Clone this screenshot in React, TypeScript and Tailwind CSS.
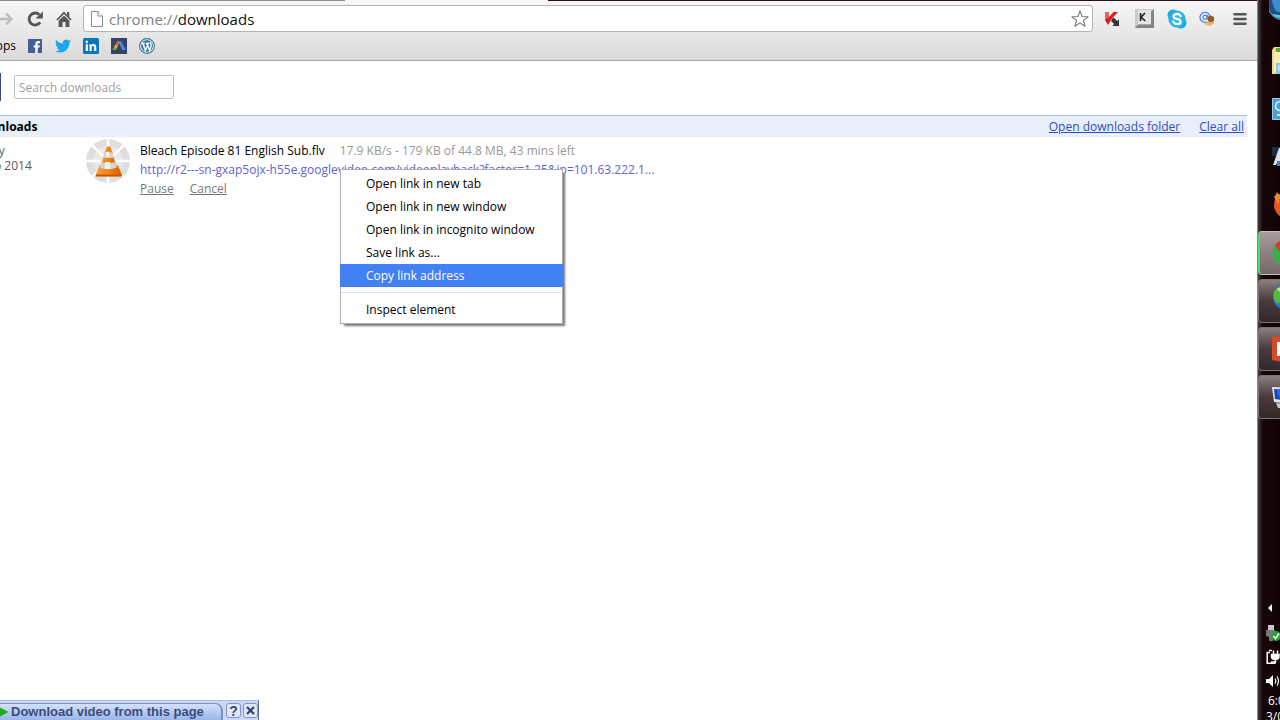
import type { ReactNode } from 'react'

const MENU_ITEMS = [
  'Open link in new tab',
  'Open link in new window',
  'Open link in incognito window',
  'Save link as...',
  'Copy link address',
]
const ACTIVE_ITEM = 'Copy link address'

/* ---------- toolbar icons ---------- */

function ForwardIcon() {
  return (
    <svg width="16" height="16" viewBox="0 0 16 16" fill="none" stroke="#bdbdbd" strokeWidth="2.4">
      <path d="M0 8h13M8 2.5 13.5 8 8 13.5" />
    </svg>
  )
}

function ReloadIcon() {
  return (
    <svg width="16" height="16" viewBox="0 0 16 16">
      <path d="M13.2 11.2A6 6 0 1 1 12.4 3.8" fill="none" stroke="#555" strokeWidth="2.8" />
      <path d="M15.8.4v7H8.600z" fill="#555" />
    </svg>
  )
}

function HomeIcon() {
  return (
    <svg width="16" height="16" viewBox="0 0 16 16" fill="#555">
      <path d="M8 .6.4 8.400l1.100 1.100L8 3l6.500 6.500 1.100-1.100-2.300-2.400V1h-2.300v2.700z" />
      <path d="M8 4.400 2.600 9.800V16H6.500v-5h3v5h3.900V9.800z" />
    </svg>
  )
}

function PageIcon() {
  return (
    <svg width="12" height="16" viewBox="0 0 12 16" fill="#fdfdfd" stroke="#8c8c8c">
      <path d="M.5.5h6.500l4.500 4.500v10.500H.5z" />
      <path d="M7 .5V5h4.500" />
    </svg>
  )
}

function StarIcon() {
  return (
    <svg width="18" height="18" viewBox="0 0 20 20" fill="#fff" stroke="#777" strokeWidth="1.200" strokeLinejoin="round">
      <path d="m10 1 2.300 6.200 6.700.3-5.200 4.100 1.800 6.400-5.600-3.700L4.400 18l1.800-6.400L1 7.500l6.700-.3z" />
    </svg>
  )
}

function KasperskyIcon() {
  return (
    <svg width="16" height="16" viewBox="0 0 16 16">
      <path d="M1 1h4v5l4.500-5H14L7.500 8 4 14 1 9z" fill="#e21b1b" />
      <path d="M1 1h4v5L1 9z" fill="#f0605a" />
      <path d="m8 8 1.600-1.600 3.600 3.600L15 8.300V15H8.300l1.900-1.900L7 10z" fill="#333" />
    </svg>
  )
}

function KeyIcon() {
  return (
    <svg width="19" height="19" viewBox="0 0 19 19">
      <path d="M0 0h19v19H0z" fill="#a8a8a8" />
      <path d="M0 0h19l-3 3H3v13l-3 3z" fill="#c9c9c9" />
      <path d="M19 0v19H0l3-3h13V3z" fill="#858585" />
      <path d="M3 1h13v14H3z" fill="#e4e4e4" />
      <path d="M5.500 4v8M10 4 6 8.200 10.300 12" fill="none" stroke="#222" strokeWidth="1.600" />
    </svg>
  )
}

function SkypeIcon() {
  return (
    <svg width="20" height="20" viewBox="0 0 20 20">
      <circle cx="6" cy="6" r="5.500" fill="#1fa8de" />
      <circle cx="14" cy="14" r="5.500" fill="#1fa8de" />
      <circle cx="10" cy="10" r="8.600" fill="#2bb3e6" />
      <path d="M13.600 7.200C13 5.600 11.600 5 10 5 8 5 6.600 6 6.600 7.500c0 3.300 7 1.500 7 4.900 0 1.700-1.600 2.700-3.500 2.700-1.900 0-3.400-.8-3.900-2.600" fill="none" stroke="#fff" strokeWidth="2.300" strokeLinecap="round" />
    </svg>
  )
}

function MailIcon() {
  return (
    <svg width="16" height="16" viewBox="0 0 16 16" fill="none">
      <path d="M8.500 10.700A5 5 0 1 1 11 6.500c0 2.400-2.700 2.300-2.700.5V4" stroke="#4f86e8" strokeWidth="1.300" />
      <circle cx="6" cy="6.300" r="2.100" stroke="#4f86e8" strokeWidth="1.200" />
      <path d="M9 10V5.500l3-1 3 1.500v4l-3 2z" fill="#9a5a25" />
      <path d="M5 13c2-2 4-2.500 6-1.500l4-1.500v2.500L11 15z" fill="#e9b36a" />
    </svg>
  )
}

function MenuIcon() {
  return (
    <svg width="14" height="14" viewBox="0 0 14 14" stroke="#555" strokeWidth="2.600" strokeLinecap="round">
      <path d="M1.500 2.300h11M1.500 7h11M1.500 11.700h11" />
    </svg>
  )
}

/* ---------- bookmark icons ---------- */

function FacebookIcon() {
  return (
    <svg width="14" height="14" viewBox="0 0 14 14">
      <path d="M0 0h14v14H0z" fill="#43609c" />
      <path d="M7.300 14V8.600H5.600V6.400h1.700V4.800c0-1.900 1.100-2.800 2.700-2.800h1.900v2.200h-1.200c-.8 0-1 .4-1 1v1.200h2.200l-.3 2.200H9.700V14z" fill="#fff" />
    </svg>
  )
}

function TwitterIcon() {
  return (
    <svg width="16" height="16" viewBox="0 0 24 24" fill="#1da8ee">
      <path d="M23.950 4.570a10 10 0 0 1-2.820.77 4.960 4.960 0 0 0 2.160-2.720 9.900 9.900 0 0 1-3.120 1.180 4.920 4.920 0 0 0-8.380 4.480C7.690 8.100 4.070 6.130 1.640 3.160a4.820 4.820 0 0 0-.67 2.480c0 1.710.87 3.210 2.190 4.100a4.900 4.900 0 0 1-2.230-.62v.06a4.920 4.920 0 0 0 3.950 4.830 5 5 0 0 1-2.210.08 4.940 4.940 0 0 0 4.600 3.420A9.870 9.870 0 0 1 0 19.540a14 14 0 0 0 7.550 2.210c9.050 0 14-7.500 14-13.980 0-.21 0-.42-.02-.63a9.900 9.900 0 0 0 2.420-2.570z" />
    </svg>
  )
}

function LinkedInIcon() {
  return (
    <svg width="16" height="16" viewBox="0 0 16 16">
      <rect width="16" height="16" rx="1.500" fill="#0877b5" />
      <path d="M2.700 6.200h2.200V13H2.700zM6.500 6.200h2.100v1c.9-1.700 4.700-1.700 4.700 1.800v4h-2.200V9.600c0-2.200-2.400-2-2.400 0V13H6.500z" fill="#fff" />
      <circle cx="3.800" cy="3.900" r="1.300" fill="#fff" />
    </svg>
  )
}

function AdsIcon() {
  return (
    <svg width="16" height="16" viewBox="0 0 16 16">
      <path d="M0 0h16v16H0z" fill="#3b4163" />
      <path d="M6.500 3H9L5 12H1.500z" fill="#e8b52c" />
      <path d="M6.500 3H9L7 7.500 4.300 7z" fill="#e2572f" />
      <path d="m1.500 12 1.300-2.500 3 .5-.8 2z" fill="#4fae55" />
      <path d="M7 3h3l5 9h-3.500z" fill="#3f8df0" />
    </svg>
  )
}

function WordPressIcon() {
  return (
    <svg width="16" height="16" viewBox="0 0 16 16" fill="none">
      <circle cx="8" cy="8" r="7.400" fill="#fff" stroke="#2f7195" strokeWidth="1.100" />
      <circle cx="8" cy="8" r="6" fill="#3e7fa3" />
      <path d="M2.500 5.500h3.200M6.800 5.500h3.400M4 5.500l2.400 7L8.200 8M8 5.500l2.600 7 1.600-4.600c.4-1.500-1.300-2.300-.8-4" stroke="#fff" strokeWidth="1.400" />
    </svg>
  )
}

/* Progress wheel with the VLC cone on top. */
function VlcProgress() {
  const spokes = [0, 45, 90, 135]
  return (
    <svg width="44" height="44" viewBox="0 0 44 44">
      <defs>
        <linearGradient id="cone" x1="0" x2="1">
          <stop offset="0" stopColor="#f9a03c" />
          <stop offset=".5" stopColor="#f58413" />
          <stop offset="1" stopColor="#d65c00" />
        </linearGradient>
        <clipPath id="coneShape">
          <path d="M20.500 8.500c.5-1.500 3.500-1.500 4 0L31 29c-2 3.500-15 3.500-17 0z" />
        </clipPath>
      </defs>
      <circle cx="22" cy="22" r="22" fill="#dedede" />
      <circle cx="22" cy="22" r="15" fill="#e8e8e8" />
      {spokes.map((a) => (
        <path key={a} d="M22 0v44" stroke="#fff" strokeWidth="2.400" transform={`rotate(${a} 22 22)`} />
      ))}
      <path d="m13.500 26.500-3.700 9c-.3 1 .2 1.800 1 1.800h24c1 0 1.400-.8 1-1.800l-3.800-9z" fill="url(#cone)" />
      <path d="M9.800 35.500h26v1.200c0 .5-.4.800-1 .8h-24c-.7 0-1-.3-1-.8z" fill="#c85700" />
      <g clipPath="url(#coneShape)">
        <path d="M12 6h20v28H12z" fill="url(#cone)" />
        <path d="M12 12.500q10.500 2 20 0v5q-9.500 3-20 0zM12 22.500q10.500 3 20 0v6q-9.500 3.500-20 0z" fill="#d4d4d4" />
        <path d="M20 12.800h3.500v5H20zM19.500 23h4.500l.5 7h-6z" fill="#f2f2f2" />
      </g>
    </svg>
  )
}

/* ---------- taskbar ---------- */

function TaskSlot({ running, active, children }: { running?: boolean; active?: boolean; children: ReactNode }) {
  const frame = active
    ? 'border-y border-l-2 border-y-[#c8bcbc] border-l-[#4fd86c] bg-linear-to-b from-[#a89c9c] to-[#75676a]'
    : running
      ? 'border-y border-l border-[#7d7172] bg-linear-to-b from-[#8b7f80] via-[#4a3a3c] to-[#34282b]'
      : 'border-l border-transparent'
  return (
    <li className="h-12 py-0.5">
      <button className={`flex h-11 w-full items-center overflow-hidden rounded-l-sm ${frame} ${active ? 'pl-3' : 'pl-[13px]'}`}>
        {children}
      </button>
    </li>
  )
}

function Taskbar() {
  return (
    <aside className="flex w-[23px] shrink-0 flex-col overflow-hidden border-l border-[#8a8585] bg-linear-to-r from-[#4a4040] via-[#170709] via-20% to-[#110305] text-white">
      <div className="flex h-[37px] shrink-0 justify-end">
        <svg width="11" height="22" viewBox="0 0 11 22">
          <circle cx="14" cy="5" r="15" fill="#1c4f80" stroke="#7d98ad" />
          <path d="M3 0h8v12C7 13 4 8 3 0z" fill="#3c8fc4" />
          <path d="M3 14c3 4 6 4 8 4v-3c-3 0-5-1-8-1z" fill="#55c3ee" />
        </svg>
      </div>
      <ul className="shrink-0">
        <TaskSlot>
          <svg className="shrink-0" width="28" height="30" viewBox="0 0 28 30">
            <path d="M0 4 2 1h8l2 3h14v24H0z" fill="#efd98a" />
            <path d="M4 2h5v4H4z" fill="#5aa83a" />
            <path d="M2 6h24v20H2z" fill="#fbedb0" />
            <path d="M4 17h20v11H4z" fill="#86c8e8" />
            <path d="M6 19h18v6H6z" fill="#bfe3f4" />
          </svg>
        </TaskSlot>
        <TaskSlot>
          <svg className="shrink-0" width="24" height="22" viewBox="0 0 24 22">
            <path d="M.5.500h23v21H.5z" fill="#4a9fd4" stroke="#9ccbe8" />
            <circle cx="8" cy="8" r="4.500" fill="none" stroke="#e2f2fb" strokeWidth="1.500" />
            <path d="M5 17h3" stroke="#fff" strokeWidth="1.500" />
          </svg>
        </TaskSlot>
        <TaskSlot>
          <svg className="shrink-0" width="24" height="20" viewBox="0 0 24 20">
            <path d="M0 0h24v9H0z" fill="#1f2c4a" />
            <path d="M7 1h9l5 18H9v-5H6l-2 4H1z" fill="#dce3ec" />
            <path d="M5 14h5v5H5z" fill="#4d7ec2" />
          </svg>
        </TaskSlot>
        <TaskSlot>
          <svg className="shrink-0" width="28" height="28" viewBox="0 0 28 28">
            <circle cx="15" cy="14" r="13" fill="#e2571e" />
            <path d="M2 6c2-2 2-3 3-5 1 3 6 4 10 4L6 13z" fill="#f08a2a" />
            <path d="M7 8c5-2 9 2 9 6s-6 4-8 1z" fill="#c8481a" />
          </svg>
        </TaskSlot>
        <TaskSlot active running>
          <svg className="shrink-0" width="28" height="28" viewBox="0 0 28 28">
            <circle cx="14" cy="14" r="13.500" fill="#3fae49" />
            <path d="M3 6A13.500 13.500 0 0 1 26 8H14l-5 7z" fill="#dc3a2c" />
            <circle cx="14" cy="14" r="6" fill="#fff" />
          </svg>
        </TaskSlot>
        <TaskSlot running>
          <svg className="shrink-0" width="28" height="32" viewBox="0 0 28 32">
            <circle cx="14" cy="12" r="13" fill="#2472cf" />
            <path d="M3 5c4-4 8-3 9-1l-4 6 2 5-4 4C1 15 0 9 3 5z" fill="#57b83e" />
            <path d="M5 4c2-2 4-2 5-1L7 7z" fill="#b8ea8c" />
          </svg>
        </TaskSlot>
        <TaskSlot running>
          <svg className="shrink-0" width="28" height="28" viewBox="0 0 28 28">
            <path d="m0 2 16-2v28L0 25z" fill="#d8482a" />
            <path d="M5 7h12v14H5z" fill="#fff" />
          </svg>
        </TaskSlot>
        <TaskSlot running>
          <svg className="shrink-0" width="28" height="24" viewBox="0 0 28 24">
            <path d="m0 2 26 1v17L2 17z" fill="#dfe4e8" />
            <path d="m2 4 22 1v12L3 14z" fill="#1c46b8" />
            <path d="M5 5c0 4 2 6 3 9l5 1V5z" fill="#2d6be0" />
            <path d="m4 18 14 2v3H6z" fill="#c9c9c9" />
          </svg>
        </TaskSlot>
      </ul>
      <div className="mt-auto flex h-[124px] shrink-0 flex-col pl-2">
        <div className="flex h-6 shrink-0 items-center">
          <svg width="14" height="8" viewBox="0 0 14 8">
            <path d="M6 0v8L2 4z" fill="#fff" />
          </svg>
        </div>
        <div className="flex h-[25px] shrink-0 items-center">
          <svg width="14" height="16" viewBox="0 0 14 16">
            <path d="M2 0h6v5H2z" fill="#c9c9c9" />
            <path d="M0 5h9v6l-2 1v4H3v-4l-3-1z" fill="#777" />
            <circle cx="10" cy="11" r="5" fill="#22a52c" />
            <path d="m7.500 11 2 2.500 3.500-5" fill="none" stroke="#fff" strokeWidth="1.500" />
          </svg>
        </div>
        <div className="flex h-6 shrink-0 items-center">
          <svg width="14" height="16" viewBox="0 0 14 16" fill="none" stroke="#fff" strokeWidth="1.500">
            <path d="M4 3.500H1.200v10.700h7.600v-2" />
            <path d="M3 1.500h3" />
            <path d="M5.500 5.500H13v1.700c0 2-1 3-3 3H8c-1.500 0-2.500-1-2.500-3z" fill="#fff" />
            <path d="M7.500 1.500v4M11.500 1.500v4M9.500 10v3H5" />
          </svg>
        </div>
        <div className="flex h-6 shrink-0 items-center">
          <svg width="14" height="14" viewBox="0 0 14 14" fill="none" stroke="#fff">
            <path d="M0 5h3l4-4v12L3 9H0z" fill="#fff" stroke="none" />
            <path d="M9 4.500q1.500 2.500 0 5M11 2.500q3 4.500 0 9" strokeWidth="1.200" />
          </svg>
        </div>
        <time className="-mr-8 block text-xs leading-4 whitespace-nowrap">
          <span className="block pl-0.5">6:05 PM</span>
          <span className="block">3/02/2014</span>
        </time>
      </div>
    </aside>
  )
}

/* ---------- browser ---------- */

function Toolbar() {
  return (
    <header className="h-[61px] border-b border-[#a3a3a3] bg-linear-to-b from-[#f7f7f7] to-[#dadada]">
      {/* bottom edge of the tab strip */}
      <div className="flex h-px">
        <div className="w-[345px] bg-[#8f8d90]" />
        <div className="w-[203px] bg-[#f7f7f7]" />
        <div className="flex-1 bg-[#2a1214]" />
      </div>
      <div className="flex h-[34px] items-center pt-px pr-2.5">
        <button aria-label="Forward" className="-ml-0.5 w-[29px]"><ForwardIcon /></button>
        <button aria-label="Reload" className="w-[29px]"><ReloadIcon /></button>
        <button aria-label="Home" className="w-[27px]"><HomeIcon /></button>
        <div className="flex h-[27px] min-w-0 flex-1 items-center rounded-[3px] border border-[#b4b4b8] bg-white pr-[3px] pl-[7px]">
          <PageIcon />
          <div className="relative ml-1.5 h-5 flex-1 text-[15px] leading-5">
            <input
              aria-label="Address"
              defaultValue="chrome://downloads"
              className="block h-5 w-full bg-transparent leading-5 text-[#111] outline-none"
            />
            {/* the scheme is painted grey over the field's own text */}
            <span className="pointer-events-none absolute inset-y-0 left-0 bg-white text-[#808080]">chrome://</span>
          </div>
          <button aria-label="Bookmark this page"><StarIcon /></button>
        </div>
        <div className="flex w-[154px] shrink-0 items-center pl-[11px]">
          <button aria-label="Kaspersky" className="w-[31px]"><KasperskyIcon /></button>
          <button aria-label="Keyboard" className="w-8"><KeyIcon /></button>
          <button aria-label="Skype" className="w-[33px]"><SkypeIcon /></button>
          <button aria-label="Mail" className="w-[34px]"><MailIcon /></button>
          <button aria-label="Menu"><MenuIcon /></button>
        </div>
      </div>
      <nav className="-ml-3 flex h-[22px] items-center text-xs text-black">
        <a href="#apps" className="w-10 shrink-0">Apps</a>
        <a href="#facebook" aria-label="Facebook" className="w-[27px]"><FacebookIcon /></a>
        <a href="#twitter" aria-label="Twitter" className="w-7"><TwitterIcon /></a>
        <a href="#linkedin" aria-label="LinkedIn" className="w-7"><LinkedInIcon /></a>
        <a href="#ads" aria-label="Ads" className="w-7"><AdsIcon /></a>
        <a href="#wordpress" aria-label="WordPress"><WordPressIcon /></a>
      </nav>
    </header>
  )
}

function ContextMenu() {
  return (
    <div
      role="menu"
      className="absolute top-7 left-[200px] w-[223px] border border-[#b0b0b0] bg-white py-0.5 text-xs text-black shadow-[3px_3px_2px_-1px_#777]"
    >
      {MENU_ITEMS.map((label) => (
        <button
          key={label}
          role="menuitem"
          className={`-mx-px block h-[23px] w-[223px] pl-[26px] text-left ${label === ACTIVE_ITEM ? 'bg-[#4281f4] text-white' : ''}`}
        >
          {label}
        </button>
      ))}
      <hr className="my-[5px] border-[#e4e4e4]" />
      <button role="menuitem" className="block h-[23px] w-full pl-[25px] text-left">Inspect element</button>
    </div>
  )
}

function Downloads() {
  return (
    <main className="flex-1 overflow-hidden pt-3">
      <div className="flex h-7 items-center">
        <div className="mr-[13px] h-7 w-px bg-[#3c4a86]" />
        <input
          type="search"
          aria-label="Search downloads"
          placeholder="Search downloads"
          className="h-6 w-40 rounded-xs border border-[#bfbfbf] px-1 text-xs placeholder:text-[#a0a0a0]"
        />
      </div>
      <div className="mt-3.5 mr-2.5 -ml-[29px] flex h-[22px] items-center border-t border-[#a3bce6] bg-[#e9eefb] pr-[3px] text-xs">
        <h1 className="font-bold text-black">Downloads</h1>
        <a href="#folder" className="ml-auto text-[#2a4fc4] underline">Open downloads folder</a>
        <a href="#clear" className="ml-[19px] text-[#2a4fc4] underline">Clear all</a>
      </div>
      <section className="-ml-[29px] flex pt-1 text-xs">
        <div className="w-[115px] shrink-0 pt-0.5 leading-[15px] text-[#5c5c5c]">
          <div>Today</div>
          <div>3 Feb 2014</div>
        </div>
        <div className="-mt-0.5 w-[54px] shrink-0"><VlcProgress /></div>
        <div className="relative leading-[19px]">
          <div className="flex whitespace-nowrap">
            <span className="text-black">Bleach Episode 81 English Sub.flv</span>
            <span className="ml-[15px] text-[#999]">17.9 KB/s - 179 KB of 44.8 MB, 43 mins left</span>
          </div>
          <a href="#source" className="block whitespace-nowrap text-[#6163d0]">
            http://r2---sn-gxap5ojx-h55e.googlevideo.com/videoplayback?factor=1.25&amp;ip=101.63.222.1...
          </a>
          <div className="flex gap-4 text-[#777]">
            <button className="underline">Pause</button>
            <button className="underline">Cancel</button>
          </div>
          <ContextMenu />
        </div>
      </section>
    </main>
  )
}

function VideoBar() {
  return (
    <footer className="flex h-5 w-[259px] border-t border-r border-t-[#a9b8e4] border-r-[#5b6b98] bg-[#c9d8f7] font-['Liberation_Sans',sans-serif] text-[#3c4c77]">
      <button className="mt-0.5 flex w-[223px] items-center overflow-hidden rounded-tr-lg border-t border-r-2 border-[#7f90ba] bg-linear-to-b from-[#d3e1fc] to-[#9ab6ea]">
        <svg className="shrink-0" width="11" height="12" viewBox="0 0 11 12">
          <path d="M0 1.500 8.500 6 0 10.500z" fill="#1fae1f" />
        </svg>
        <span className="text-[13px] leading-4 font-bold whitespace-nowrap">Download video from this page</span>
      </button>
      <div className="flex gap-0.5 pt-0.5 pl-[3px] text-sm leading-[14px] font-bold">
        <button aria-label="Help" className="h-[15px] w-[15px] rounded-[3px] border border-[#8494bd] bg-[#dfe8fb]">?</button>
        <button aria-label="Close" className="flex h-[15px] w-[15px] items-center justify-center rounded-[3px] border border-[#8494bd] bg-[#dfe8fb]">
          <svg width="9" height="9" viewBox="0 0 9 9" stroke="#33436f" strokeWidth="2.200">
            <path d="m1 1 7 7M8 1 1 8" />
          </svg>
        </button>
      </div>
    </footer>
  )
}

export default function App() {
  return (
    <div className="flex h-screen overflow-hidden bg-white font-['Open_Sans','Noto_Sans',sans-serif]">
      <div className="flex min-w-0 flex-1 flex-col overflow-hidden">
        <Toolbar />
        <Downloads />
        <VideoBar />
      </div>
      <Taskbar />
    </div>
  )
}
